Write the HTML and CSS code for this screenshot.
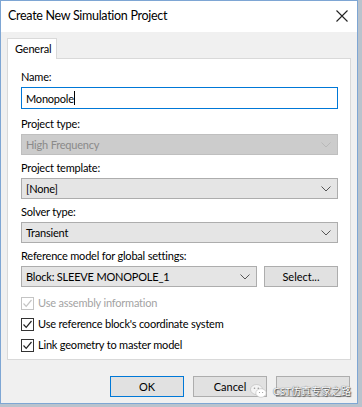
FILE: index.html
```html
<!DOCTYPE html>
<html lang="en">
<head>
    <meta charset="UTF-8">
    <meta name="viewport" content="width=device-width, initial-scale=1.0">
    <title>Create New Simulation Project</title>
    <link rel="stylesheet" href="styles.css">
</head>
<body>
  <div class="window">
    <div class="titlebar">
      <span class="title">Create New Simulation Project</span>
      <svg class="close" width="12" height="12" viewBox="0 0 12 12">
        <path d="M0.5 0.5 L11.5 11.5 M11.5 0.5 L0.5 11.5" stroke="#222" stroke-width="1.1" fill="none"/>
      </svg>
    </div>

    <div class="content">
      <div class="tabs">
        <div class="tab">General</div>
      </div>

      <div class="panel">
        <label class="field">
          <span>Name:</span>
          <div class="textbox">Monopole<i class="caret"></i></div>
        </label>

        <label class="field">
          <span>Project type:</span>
          <div class="select disabled">High Frequency
            <svg class="chev" width="10" height="6" viewBox="0 0 10 6"><path d="M0.5 0.5 L5 5 L9.5 0.5" fill="none" stroke="#b8b8b8"/></svg>
          </div>
        </label>

        <label class="field">
          <span>Project template:</span>
          <div class="select">[None]
            <svg class="chev" width="10" height="6" viewBox="0 0 10 6"><path d="M0.5 0.5 L5 5 L9.5 0.5" fill="none" stroke="#555"/></svg>
          </div>
        </label>

        <label class="field">
          <span>Solver type:</span>
          <div class="select">Transient
            <svg class="chev" width="10" height="6" viewBox="0 0 10 6"><path d="M0.5 0.5 L5 5 L9.5 0.5" fill="none" stroke="#555"/></svg>
          </div>
        </label>

        <div class="field">
          <span>Reference model for global settings:</span>
          <div class="row">
            <div class="select grow">Block: SLEEVE MONOPOLE_1
              <svg class="chev" width="10" height="6" viewBox="0 0 10 6"><path d="M0.5 0.5 L5 5 L9.5 0.5" fill="none" stroke="#555"/></svg>
            </div>
            <button class="btn small">Select...</button>
          </div>
        </div>

        <div class="checks">
          <div class="check disabled">
            <svg width="13" height="13" viewBox="0 0 13 13"><rect x="0.5" y="0.5" width="12" height="12" fill="#fff" stroke="#c4c4c4"/><path d="M2.5 6.5 L5.2 9.3 L10.5 3" fill="none" stroke="#c4c4c4" stroke-width="1.2"/></svg>
            Use assembly information
          </div>
          <div class="check">
            <svg width="13" height="13" viewBox="0 0 13 13"><rect x="0.5" y="0.5" width="12" height="12" fill="#fff" stroke="#333"/><path d="M2.5 6.5 L5.2 9.3 L10.5 3" fill="none" stroke="#222" stroke-width="1.2"/></svg>
            Use reference block's coordinate system
          </div>
          <div class="check">
            <svg width="13" height="13" viewBox="0 0 13 13"><rect x="0.5" y="0.5" width="12" height="12" fill="#fff" stroke="#333"/><path d="M2.5 6.5 L5.2 9.3 L10.5 3" fill="none" stroke="#222" stroke-width="1.2"/></svg>
            Link geometry to master model
          </div>
        </div>
      </div>

      <footer class="buttons">
        <button class="btn default">OK</button>
        <button class="btn">Cancel</button>
        <button class="btn"></button>
      </footer>
    </div>

    <div class="watermark">
      <svg width="17" height="14" viewBox="0 0 17 14">
        <ellipse cx="6.5" cy="5.5" rx="6" ry="5" fill="#f4f4f4" stroke="#bbb" stroke-width="0.6"/>
        <ellipse cx="11" cy="9" rx="5.2" ry="4.3" fill="#fff" stroke="#bbb" stroke-width="0.6"/>
        <circle cx="4.5" cy="4.2" r="0.8" fill="#999"/>
        <circle cx="8.3" cy="4.2" r="0.8" fill="#999"/>
        <circle cx="9.5" cy="8.5" r="0.6" fill="#999"/>
        <circle cx="12.6" cy="8.5" r="0.6" fill="#999"/>
      </svg>
      <span>CST仿真专家之路</span>
    </div>
  </div>
</body>
</html>
```

FILE: styles.css
```css
body {
  margin: 0;
  background: #b9c3cd;
  font-family: Lato, "Noto Sans CJK SC", sans-serif;
  font-size: 11px;
  letter-spacing: -0.2px;
  color: #000;
}

.window {
  position: relative;
  width: 356px;
  height: 402px;
  border: 1px solid #7ea6d4;
  background: #f0f0f0;
  display: flex;
  flex-direction: column;
}

.titlebar {
  height: 31px;
  background: #fff;
  display: flex;
  align-items: center;
  justify-content: space-between;
  padding: 0 9px 0 7px;
}
.title {
  font-size: 12.5px;
  letter-spacing: -0.3px;
  margin-top: -2px;
}
.close {
  margin-top: -2px;
}

.content {
  padding: 6px 6px 0 6px;
}

.tabs {
  display: flex;
  height: 21px;
}
.tab {
  width: 50px;
  height: 21px;
  box-sizing: border-box;
  background: #fff;
  border: 1px solid #d9d9d9;
  border-bottom: none;
  padding: 3px 0 0 7px;
  position: relative;
  z-index: 1;
}

.panel {
  height: 302px;
  box-sizing: border-box;
  background: #fff;
  border: 1px solid #d9d9d9;
  margin-top: -1px;
  padding: 10px 12px 0 13px;
  display: flex;
  flex-direction: column;
  gap: 5px;
}

.field {
  display: flex;
  flex-direction: column;
  gap: 3px;
}
.field > span {
  line-height: 15px;
}

.textbox {
  height: 22px;
  box-sizing: border-box;
  border: 1px solid #0078d7;
  padding: 2px 4px;
  display: flex;
  align-items: center;
  margin-bottom: 2px;
}
.caret {
  display: inline-block;
  width: 1px;
  height: 14px;
  background: #000;
}

.select {
  height: 21px;
  box-sizing: border-box;
  background: #e5e5e5;
  border: 1px solid #adadad;
  padding: 0 4px;
  display: flex;
  align-items: center;
  justify-content: space-between;
}
.select.disabled {
  background: #cccccc;
  border-color: #bfbfbf;
  color: #8a8a8a;
}
.chev {
  margin-right: 2px;
}

.row {
  display: flex;
  gap: 7px;
}
.grow {
  flex: 1;
}

.btn {
  font: inherit;
  width: 74px;
  height: 21px;
  background: #e1e1e1;
  border: 1px solid #adadad;
  padding: 0;
  color: #000;
}
.btn.default {
  border: 1px solid #0078d7;
}

.checks {
  margin-top: 3px;
  display: flex;
  flex-direction: column;
  gap: 5px;
}
.check {
  display: flex;
  align-items: center;
  gap: 4px;
  line-height: 16px;
}
.check.disabled {
  color: #a3a3a3;
}

.buttons {
  display: flex;
  justify-content: flex-end;
  gap: 9px;
  padding: 16px 1px 0 0;
}

.watermark {
  position: absolute;
  left: 249px;
  top: 382px;
  display: flex;
  align-items: center;
  gap: 6px;
  color: #fff;
  font-size: 10px;
  letter-spacing: 0;
  text-shadow: 0 0 1px #333, 1px 1px 1px #555;
}
```
